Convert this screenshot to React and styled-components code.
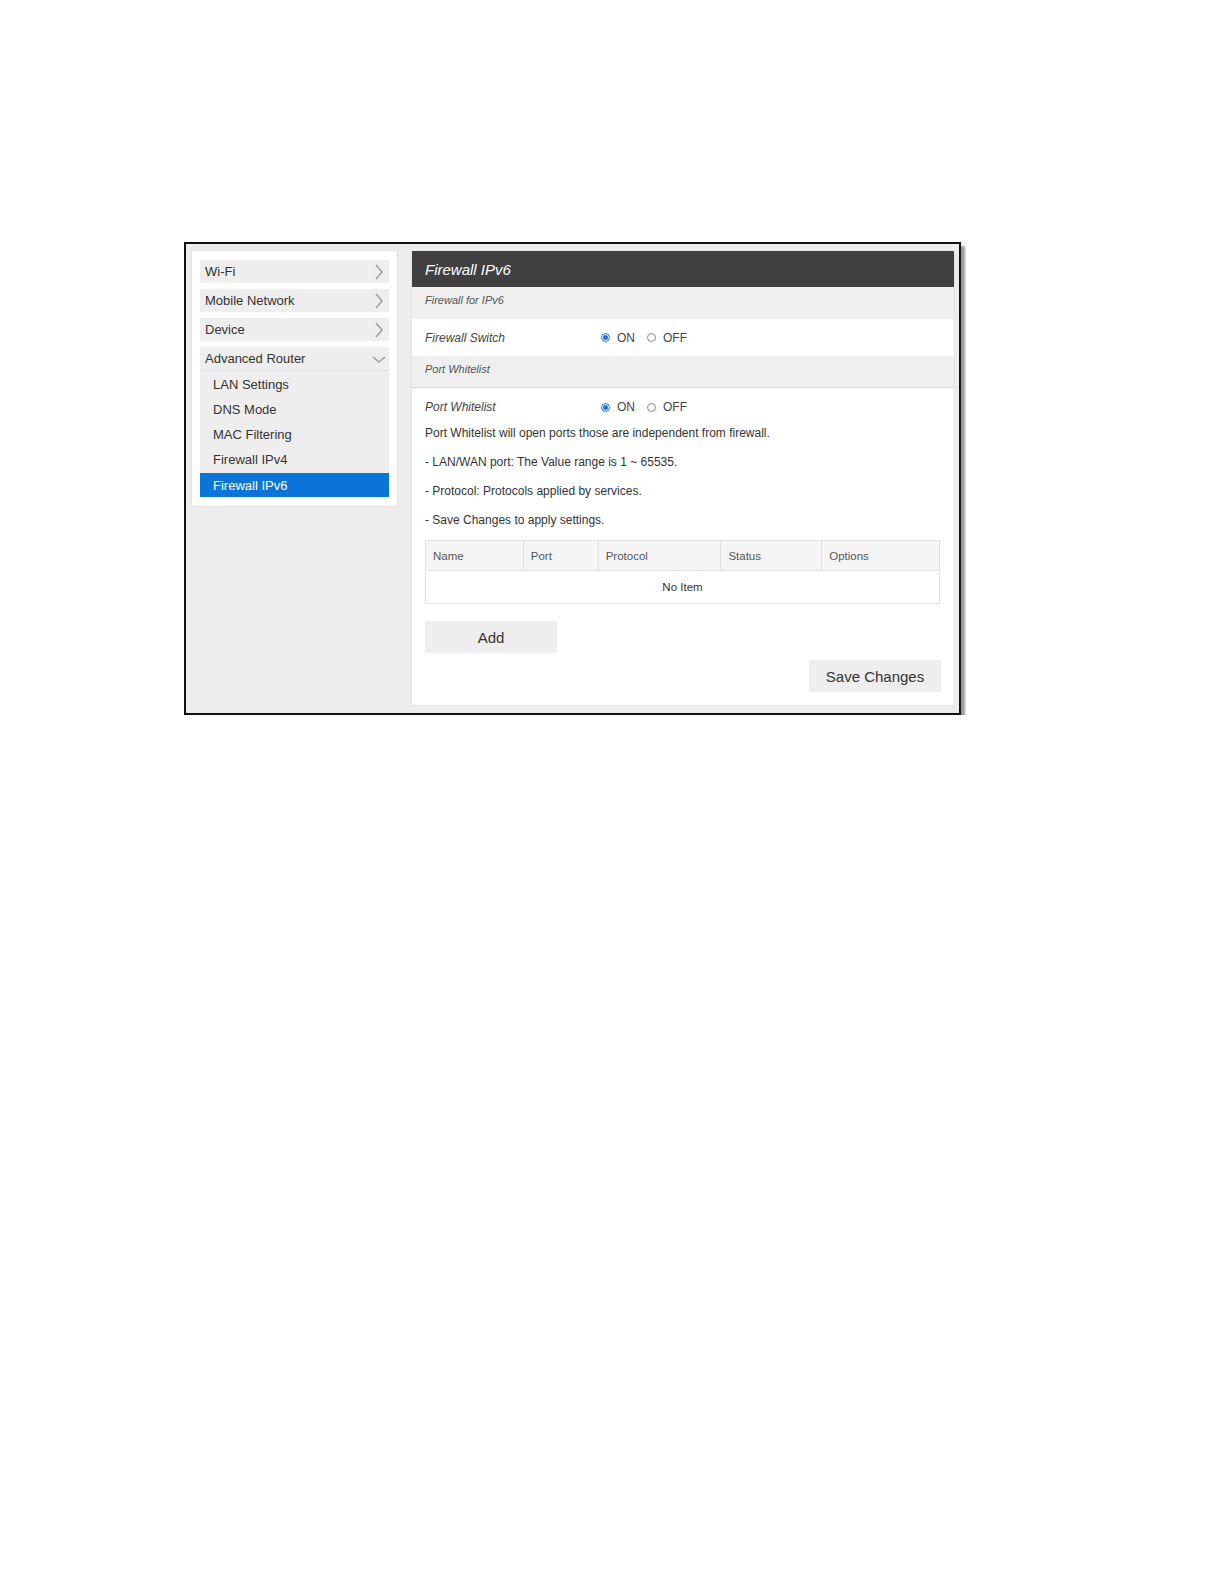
import React, { useState } from "react";
import styled, { createGlobalStyle } from "styled-components";

const GlobalStyle = createGlobalStyle`
  body {
    margin: 0;
    background: #ffffff;
    font-family: "Liberation Sans", Arial, sans-serif;
  }
`;

const Page = styled.div`
  padding: 242px 0 0 184px;
`;

const Frame = styled.div`
  width: 777px;
  height: 473px;
  box-sizing: border-box;
  border: 2px solid #111;
  background: #ededed;
  box-shadow: 4px 4px 2px #9a9a9a;
  display: flex;
  align-items: flex-start;
  gap: 13px;
  padding: 6px 4px 10px 5px;
`;

const Sidebar = styled.nav`
  width: 207px;
  box-sizing: border-box;
  background: #fff;
  border: 1px solid #e2e2e2;
  border-radius: 2px;
  padding: 9px 8px 9px 8px;
  display: flex;
  flex-direction: column;
  gap: 6px;
`;

const MenuItem = styled.div`
  height: 23px;
  background: #eeeeee;
  display: flex;
  align-items: center;
  justify-content: space-between;
  padding: 0 3px 0 5px;
  font-size: 13px;
  color: #333;
  border-bottom: ${(p) => (p.$open ? "1px solid #dedede" : "none")};
`;

const SubMenu = styled.div`
  background: #eeeeee;
  margin-top: -6px;
  padding-top: 1px;
  display: flex;
  flex-direction: column;
`;

const SubItem = styled.div`
  height: ${(p) => (p.$active ? 24 : 25)}px;
  margin-top: ${(p) => (p.$active ? "1px" : "0")};
  display: flex;
  align-items: center;
  padding-left: 13px;
  font-size: 13px;
  color: ${(p) => (p.$active ? "#fff" : "#333")};
  background: ${(p) => (p.$active ? "#0b74d8" : "transparent")};
`;

const Main = styled.section`
  width: 544px;
  box-sizing: border-box;
  background: #fff;
  border: 1px solid #e4e4e4;
  border-radius: 2px;
  overflow: hidden;
`;

const Header = styled.h2`
  margin: 0;
  height: 36px;
  background: #404040;
  color: #fff;
  font-size: 15px;
  font-style: italic;
  font-weight: normal;
  display: flex;
  align-items: center;
  padding-left: 13px;
`;

const Section = styled.div`
  height: ${(p) => p.$h}px;
  box-sizing: border-box;
  background: #efefef;
  padding: 7px 13px 0;
  font-size: 11px;
  font-style: italic;
  color: #555;
  border-bottom: ${(p) => (p.$line ? "1px solid #dadada" : "none")};
`;

const Row = styled.div`
  height: ${(p) => p.$h}px;
  display: flex;
  align-items: center;
  padding-left: ${(p) => (p.$flush ? 0 : 13)}px;
  font-size: 12px;
`;

const Label = styled.span`
  width: 176px;
  font-style: italic;
  color: #444;
`;

const RadioGroup = styled.label`
  display: flex;
  align-items: center;
  gap: 7px;
  margin-right: 12px;
  color: #444;
  font-size: 12px;
`;

const RadioDot = styled.span`
  width: 9px;
  height: 9px;
  border-radius: 50%;
  box-sizing: border-box;
  border: 1px solid ${(p) => (p.$on ? "#1a73e8" : "#888")};
  background: #fff;
  display: flex;
  align-items: center;
  justify-content: center;
  &::after {
    content: "";
    width: 5px;
    height: 5px;
    border-radius: 50%;
    background: ${(p) => (p.$on ? "#1a73e8" : "transparent")};
  }
`;

const Body = styled.div`
  padding: 0 13px 13px;
`;

const Note = styled.p`
  margin: 0;
  height: ${(p) => p.$h || 29}px;
  font-size: 12px;
  color: #333;
  line-height: 14px;
`;

const Table = styled.table`
  width: 515px;
  border-collapse: collapse;
  margin-top: 13px;
  font-size: 11.5px;
  color: #555;
`;

const Th = styled.th`
  width: ${(p) => p.$w}px;
  height: 30px;
  box-sizing: border-box;
  text-align: left;
  font-weight: normal;
  padding: 0 7px;
  background: #f5f5f5;
  border: 1px solid #e0e0e0;
`;

const Td = styled.td`
  height: 30px;
  text-align: center;
  color: #333;
  border: 1px solid #e0e0e0;
`;

const Button = styled.button`
  width: 132px;
  height: 32px;
  border: none;
  background: #eeeeee;
  font-family: inherit;
  font-size: 15px;
  color: #333;
  cursor: pointer;
  display: block;
  margin-left: ${(p) => (p.$right ? "auto" : "0")};
  margin-top: ${(p) => p.$mt}px;
`;

const Chevron = ({ down }) => (
  <svg width="14" height="16" viewBox="0 0 14 16" fill="none">
    {down ? (
      <path d="M1 6 L7 11 L13 6" stroke="#a0a0a0" strokeWidth="1.6" />
    ) : (
      <path d="M4 1 L10 8 L4 15" stroke="#a0a0a0" strokeWidth="1.6" />
    )}
  </svg>
);

const Switch = ({ label }) => {
  const [on, setOn] = useState(true);
  return (
    <>
      <Label>{label}</Label>
      <RadioGroup onClick={() => setOn(true)}>
        <RadioDot $on={on} />
        ON
      </RadioGroup>
      <RadioGroup onClick={() => setOn(false)}>
        <RadioDot $on={!on} />
        OFF
      </RadioGroup>
    </>
  );
};

const subItems = ["LAN Settings", "DNS Mode", "MAC Filtering", "Firewall IPv4", "Firewall IPv6"];
const columns = [
  ["Name", 98],
  ["Port", 75],
  ["Protocol", 123],
  ["Status", 101],
  ["Options", 118],
];

export default function App() {
  return (
    <Page>
      <GlobalStyle />
      <Frame>
        <Sidebar>
          {["Wi-Fi", "Mobile Network", "Device"].map((m) => (
            <MenuItem key={m}>
              {m}
              <Chevron />
            </MenuItem>
          ))}
          <MenuItem $open>
            Advanced Router
            <Chevron down />
          </MenuItem>
          <SubMenu>
            {subItems.map((s) => (
              <SubItem key={s} $active={s === "Firewall IPv6"}>
                {s}
              </SubItem>
            ))}
          </SubMenu>
        </Sidebar>
        <Main>
          <Header>Firewall IPv6</Header>
          <Section $h={32}>Firewall for IPv6</Section>
          <Row $h={37}>
            <Switch label="Firewall Switch" />
          </Row>
          <Section $h={32} $line>
            Port Whitelist
          </Section>
          <Body>
            <Row $h={38} $flush>
              <Switch label="Port Whitelist" />
            </Row>
            <Note>Port Whitelist will open ports those are independent from firewall.</Note>
            <Note>- LAN/WAN port: The Value range is 1 ~ 65535.</Note>
            <Note>- Protocol: Protocols applied by services.</Note>
            <Note $h={14}>- Save Changes to apply settings.</Note>
            <Table>
              <thead>
                <tr>
                  {columns.map(([c, w]) => (
                    <Th key={c} $w={w}>
                      {c}
                    </Th>
                  ))}
                </tr>
              </thead>
              <tbody>
                <tr>
                  <Td colSpan={5}>No Item</Td>
                </tr>
              </tbody>
            </Table>
            <Button $mt={17}>Add</Button>
            <Button $right $mt={7}>
              Save Changes
            </Button>
          </Body>
        </Main>
      </Frame>
    </Page>
  );
}
